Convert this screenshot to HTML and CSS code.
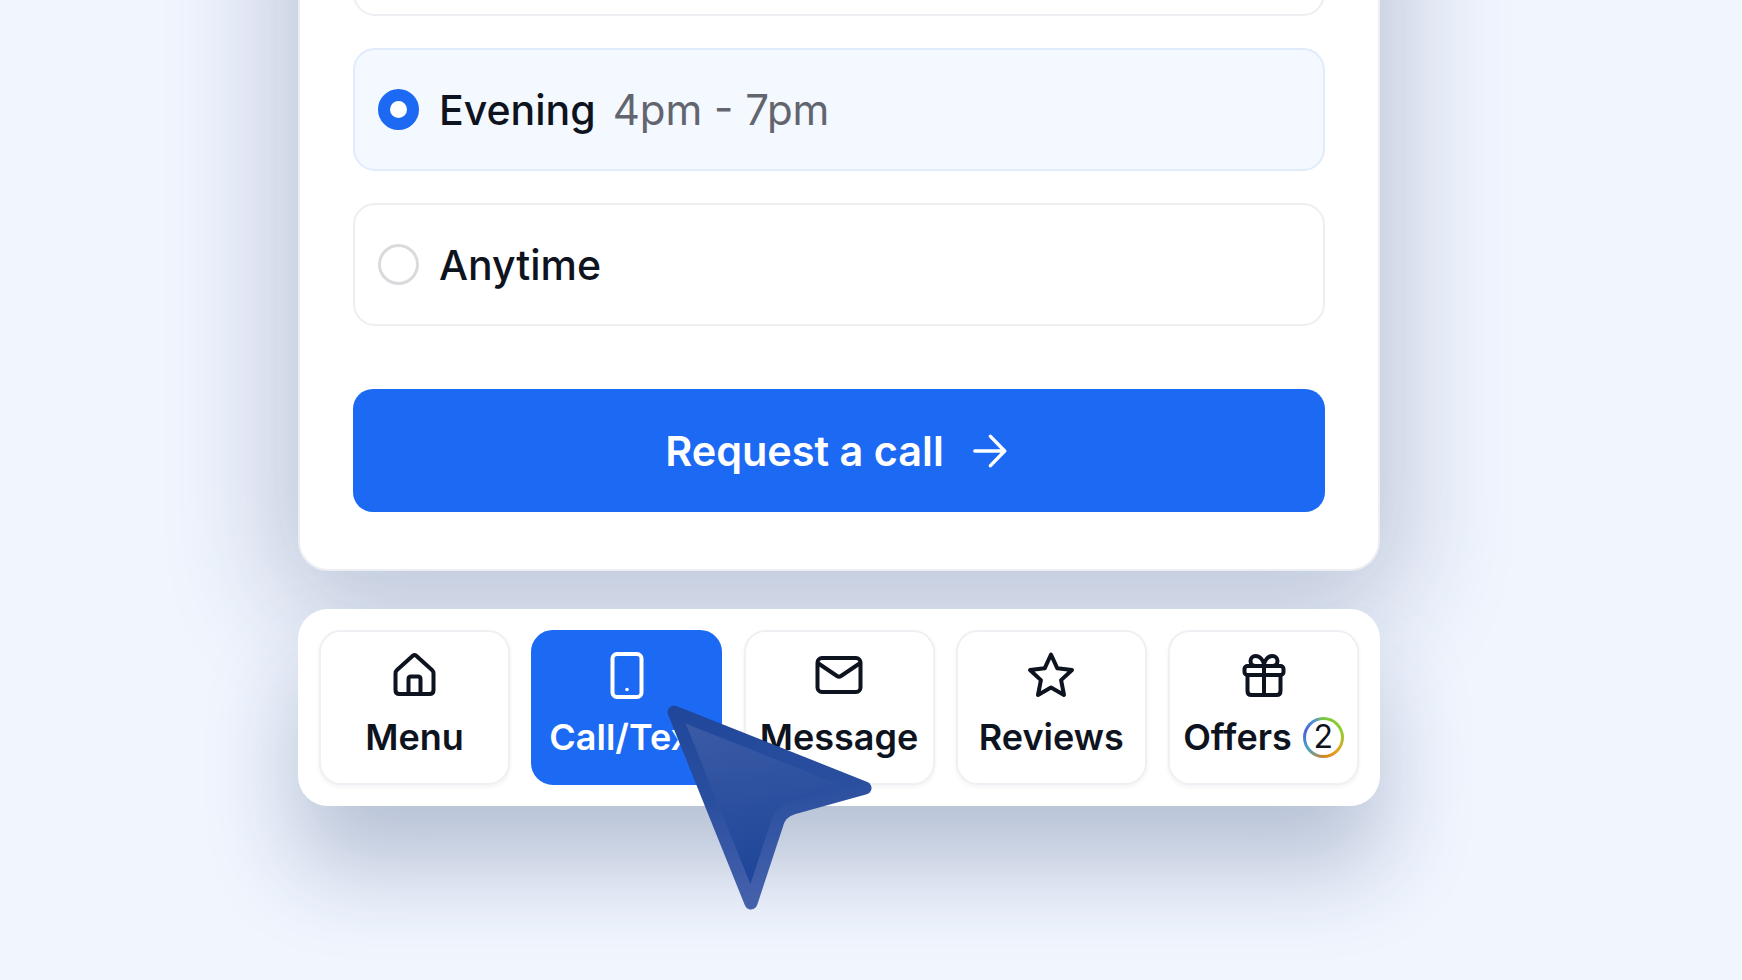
FILE: index.html
```html
<!DOCTYPE html>
<html lang="en">
  <head>
    <meta charset="UTF-8" />
    <title>Request a call</title>
    <link rel="stylesheet" href="styles.css">
  </head>
  <body>
    <div class="page">
      <div class="card">
        <div class="option"></div>

        <div class="option selected">
          <span class="radio"></span>
          <span class="optionName">Evening</span>
          <span class="optionTime">4pm - 7pm</span>
        </div>

        <div class="option">
          <span class="radio"></span>
          <span class="optionName">Anytime</span>
        </div>

        <button class="requestButton">
          Request a call
          <svg class="arrow" viewBox="0 0 36 36" fill="none">
            <path d="M2 18H33M18.500 2.500L33.500 18L18.500 33.500" />
          </svg>
        </button>
      </div>

      <nav class="tabs">
        <div class="tab">
          <svg class="icon" viewBox="0 0 48 48" fill="none">
            <path d="M21.800 4.800L6 19Q4.500 20.300 4.500 22.500V39Q4.500 43 8.500 43H38.500Q42.500 43 42.500 39V22.500Q42.500 20.300 41 19L25.200 4.800Q23.500 3.300 21.800 4.800Z" />
            <path d="M17.500 43V28Q17.500 25.500 20 25.500H27Q29.500 25.500 29.500 28V43" />
          </svg>
          <span>Menu</span>
        </div>

        <div class="tab active">
          <svg class="icon" viewBox="0 0 48 48" fill="none">
            <rect x="9.500" y="3" width="29" height="43" rx="4.500" />
            <circle class="dot" cx="24" cy="38.500" r="1.800" />
          </svg>
          <span>Call/Text</span>
        </div>

        <div class="tab">
          <svg class="icon" viewBox="0 0 48 48" fill="none">
            <rect x="2.500" y="7" width="43" height="34" rx="4.500" />
            <path d="M3.500 12.500L22 25Q24 26.300 26 25L44.500 12.500" />
          </svg>
          <span>Message</span>
        </div>

        <div class="tab">
          <svg class="icon" viewBox="0 0 48 48" fill="none">
            <path d="M24 3.500L30.300 17.300L45 19L34.100 29.100L37 44L24 36.500L11 44L13.900 29.100L3 19L17.700 17.300Z" />
          </svg>
          <span>Reviews</span>
        </div>

        <div class="tab">
          <svg class="icon" viewBox="0 0 48 48" fill="none">
            <rect x="4.500" y="15" width="39" height="9" rx="3" />
            <path d="M7.500 24V40Q7.500 44 11.500 44H36.500Q40.500 44 40.500 40V24" />
            <path d="M24 15V44" />
            <path d="M24 15H15.500C12.500 15 10.500 12.700 10.500 10C10.500 7 12.800 5 15.500 5C20.500 5 24 10 24 15C24 10 27.500 5 32.500 5C35.200 5 37.500 7 37.500 10C37.500 12.700 35.500 15 32.500 15H24" />
          </svg>
          <span class="offers">Offers <span class="count"><span class="countNum">2</span></span></span>
        </div>
      </nav>

      <svg class="cursor" viewBox="0 0 220 220">
        <defs>
          <linearGradient id="cursorFill" x1="0" y1="0" x2="0.15" y2="1">
            <stop offset="0" stop-color="#3d5ca6" />
            <stop offset="1" stop-color="#1c4498" />
          </linearGradient>
          <linearGradient id="cursorEdge" x1="0" y1="0" x2="0.15" y2="1">
            <stop offset="0" stop-color="#20479b" />
            <stop offset="0.5" stop-color="#2b4f9f" />
            <stop offset="1" stop-color="#4360ab" />
          </linearGradient>
        </defs>
        <path d="M14 12L205 88L133 108Q120 112 117 124L91 203Z" fill="url(#cursorFill)" stroke="url(#cursorEdge)" stroke-width="13" stroke-linejoin="round" />
      </svg>
    </div>
  </body>
</html>
```

FILE: styles.css
```css
* {
  box-sizing: border-box;
  font-family: "Inter", sans-serif;
}

body {
  margin: 0;
  height: 980px;
  overflow: hidden;
  background-color: #f0f5fe;
  color: #0e1320;
}

.page {
  display: flow-root;
  position: relative;
  width: 1082px;
  margin-left: 298px;
}

.card {
  display: flex;
  flex-direction: column;
  gap: 32px;
  margin-top: -133px;
  padding: 24px 53px 57px;
  background: #ffffff;
  border: 2px solid #eceef2;
  border-radius: 30px;
  box-shadow: 0 20px 110px 20px rgba(30, 55, 105, 0.25);
}

.option {
  display: flex;
  align-items: center;
  height: 123px;
  padding-left: 23px;
  background: #ffffff;
  border: 2px solid #eceef2;
  border-radius: 22px;
  font-size: 41px;
}

.option.selected {
  background: #f4f8ff;
  border-color: #e0ebfb;
}

.radio {
  width: 41px;
  height: 41px;
  margin-right: 20px;
  border: 3px solid #d9dadd;
  border-radius: 50%;
  background: #ffffff;
}

.selected .radio {
  border: 12px solid #1c69f4;
}

.optionName {
  font-weight: 500;
}

.optionTime {
  margin-left: 17px;
  color: #62656e;
  font-size: 42px;
}

.requestButton {
  display: flex;
  align-items: center;
  justify-content: center;
  gap: 29px;
  height: 123px;
  margin-top: 31px;
  padding: 0 6px 0 0;
  background-color: #1c69f4;
  color: white;
  border: none;
  border-radius: 20px;
  font-size: 41.400px;
  font-weight: 600;
}

.arrow {
  width: 34px;
  height: 34px;
}

.arrow path {
  stroke: #ffffff;
  stroke-width: 3.700;
  stroke-linecap: round;
  stroke-linejoin: round;
}

.tabs {
  display: flex;
  gap: 21.250px;
  margin-top: 38px;
  padding: 21px;
  background: #ffffff;
  border-radius: 30px;
  box-shadow: 0 60px 90px 0 rgba(30, 55, 105, 0.27);
}

.tab {
  flex: 1;
  display: flex;
  flex-direction: column;
  align-items: center;
  height: 155px;
  padding-top: 19px;
  gap: 13px;
  background: #ffffff;
  border: 2px solid #eff0f3;
  border-radius: 22px;
  box-shadow: 0 2px 4px rgba(20, 30, 60, 0.06);
  font-size: 36px;
  font-weight: 600;
  line-height: 50px;
}

.tab.active {
  background-color: #1c69f4;
  border-color: #1c69f4;
  box-shadow: none;
  color: white;
}

.icon {
  width: 48px;
  height: 48px;
  flex: none;
}

.icon path,
.icon rect {
  stroke: #0e1320;
  stroke-width: 4;
  stroke-linecap: round;
  stroke-linejoin: round;
}

.active .icon rect {
  stroke: #ffffff;
}

.icon .dot {
  fill: #ffffff;
}

.offers {
  display: flex;
  align-items: center;
  gap: 11px;
  white-space: nowrap;
}

.count {
  display: flex;
  align-items: center;
  justify-content: center;
  width: 41px;
  height: 41px;
  border-radius: 50%;
  background: conic-gradient(#7bc83a 0deg, #8fce2f 70deg, #e8a020 140deg, #d9861f 175deg, #4aa0c8 235deg, #4a63d8 290deg, #4f8fd8 330deg, #7bc83a 360deg);
}

.countNum {
  display: flex;
  align-items: center;
  justify-content: center;
  width: 35px;
  height: 35px;
  border-radius: 50%;
  background: #ffffff;
  font-size: 32px;
  font-weight: 400;
}

.cursor {
  position: absolute;
  left: 362px;
  top: 700px;
  width: 220px;
  height: 220px;
}
```
